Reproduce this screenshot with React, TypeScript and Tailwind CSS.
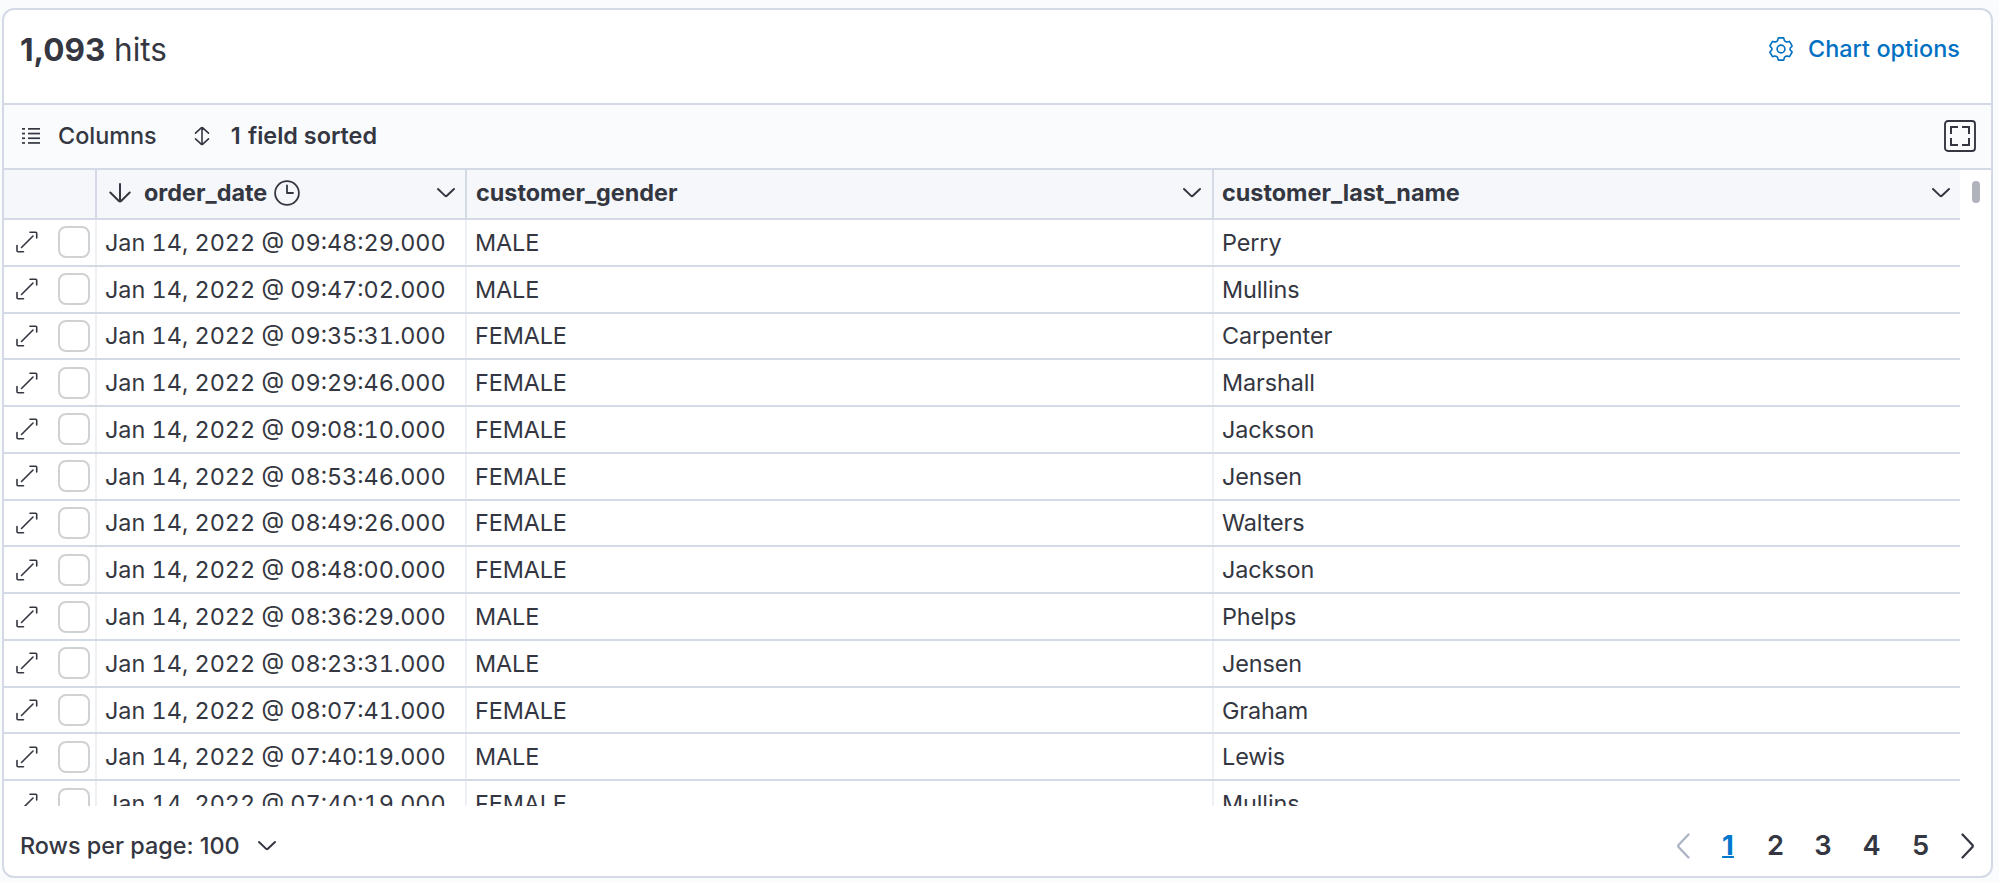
import React from "react";

const rows: [string, string, string][] = [
  ["09:48:29.000", "MALE", "Perry"],
  ["09:47:02.000", "MALE", "Mullins"],
  ["09:35:31.000", "FEMALE", "Carpenter"],
  ["09:29:46.000", "FEMALE", "Marshall"],
  ["09:08:10.000", "FEMALE", "Jackson"],
  ["08:53:46.000", "FEMALE", "Jensen"],
  ["08:49:26.000", "FEMALE", "Walters"],
  ["08:48:00.000", "FEMALE", "Jackson"],
  ["08:36:29.000", "MALE", "Phelps"],
  ["08:23:31.000", "MALE", "Jensen"],
  ["08:07:41.000", "FEMALE", "Graham"],
  ["07:40:19.000", "MALE", "Lewis"],
  ["07:40:19.000", "FEMALE", "Mullins"],
];

function Chevron({ className = "" }: { className?: string }) {
  return (
    <svg viewBox="0 0 20 12" className={`h-3 w-5 shrink-0 ${className}`} fill="none" stroke="currentColor" strokeWidth="2" strokeLinecap="round" strokeLinejoin="round">
      <path d="M2 2l6.9 6.6a1.6 1.6 0 0 0 2.2 0L18 2" />
    </svg>
  );
}

function Gear() {
  return (
    <svg viewBox="0 0 24 24" className="h-6 w-6 shrink-0" fill="none" stroke="currentColor" strokeWidth="1.6" strokeLinejoin="round">
      <path d="M9.800 .9h4.400q.6 0 .7.600l.4 1.700q.2.700.8 1l.9.500q.6.300 1.200.200l1.700-.5q.600-.2.900.4l2.100 3.700q.300.500-.1.900l-1.300 1.300q-.5.500-.5 1.300t.5 1.300l1.300 1.300q.4.400.1.900l-2.100 3.700q-.3.600-.9.400l-1.700-.5q-.6-.1-1.200.2l-.9.500q-.6.300-.8 1l-.4 1.700q-.1.600-.7.600H9.800q-.6 0-.7-.6l-.4-1.700q-.2-.7-.8-1l-.9-.5q-.6-.3-1.200-.2l-1.700.5q-.6.200-.9-.4l-2.100-3.700q-.3-.5.100-.9l1.300-1.300q.5-.5.5-1.300t-.5-1.300L1.200 9.400q-.4-.4-.1-.9l2.100-3.700q.3-.6.9-.4l1.700.5q.6.100 1.200-.2l.9-.5q.6-.3.800-1l.4-1.700q.1-.6.700-.6z" />
      <circle cx="12" cy="12" r="3.900" />
    </svg>
  );
}

function ListIcon() {
  return (
    <svg viewBox="0 0 18 16" className="h-4 w-[18px] shrink-0" fill="currentColor">
      {[0, 4.7, 9.4, 14.1].map((y) => (
        <g key={y}>
          <rect x="0" y={y} width="3" height="1.700" />
          <rect x="6" y={y} width="12" height="1.700" />
        </g>
      ))}
    </svg>
  );
}

function SortIcon() {
  return (
    <svg viewBox="0 0 16 20" className="h-5 w-4 shrink-0" fill="none" stroke="currentColor" strokeWidth="1.600" strokeLinecap="round" strokeLinejoin="round">
      <path d="M8 1.500v17M1.500 7.200L7.200 1.900q.8-.7 1.600 0L14.500 7.200M1.500 12.800l5.700 5.300q.8.700 1.600 0l5.700-5.300" />
    </svg>
  );
}

function FullScreenIcon() {
  return (
    <svg viewBox="0 0 32 32" className="h-8 w-8 shrink-0" fill="none" stroke="currentColor">
      <rect x="1" y="1" width="30" height="30" rx="3" strokeWidth="1.900" />
      <path d="M7 14V7h7M18 7h7v7M25 18v7h-7M14 25H7v-7" strokeWidth="2" />
    </svg>
  );
}

function ExpandIcon() {
  return (
    <svg viewBox="0 0 22 22" className="h-[22px] w-[22px] shrink-0" fill="none" stroke="currentColor" strokeWidth="1.600" strokeLinecap="round" strokeLinejoin="round">
      <path d="M14 1.300h5.700a1 1 0 0 1 1 1V7M1 14.500v5.200a1 1 0 0 0 1 1h5.500M5.500 16.500L17 5" />
    </svg>
  );
}

function ArrowDown() {
  return (
    <svg viewBox="0 0 22 20" className="h-5 w-[22px] shrink-0" fill="none" stroke="currentColor" strokeWidth="2" strokeLinecap="round" strokeLinejoin="round">
      <path d="M11 1v17.500M1.300 9.500l8.600 8.500a1.500 1.500 0 0 0 2.200 0l8.600-8.500" />
    </svg>
  );
}

function ClockIcon() {
  return (
    <svg viewBox="0 0 26 26" className="h-[26px] w-[26px] shrink-0" fill="none" stroke="currentColor" strokeWidth="1.800" strokeLinecap="round" strokeLinejoin="round">
      <circle cx="13" cy="13" r="11.900" />
      <path d="M13 5.500V13h6" />
    </svg>
  );
}

function PageArrow({ className = "", d }: { className?: string; d: string }) {
  return (
    <svg viewBox="0 0 14 26" className={`h-[26px] w-[14px] shrink-0 ${className}`} fill="none" stroke="currentColor" strokeWidth="2.300" strokeLinecap="round" strokeLinejoin="round">
      <path d={d} />
    </svg>
  );
}

export default function App() {
  return (
    <div className="h-[883px] w-[1999px] overflow-hidden bg-[#fafbfd] pt-2 pl-0.5 font-['Inter',sans-serif] text-[23.4px] leading-7 text-[#343741]">
      <section className="flex h-[870px] w-[1991px] flex-col overflow-hidden rounded-[12px] border-2 border-[#d3dae6] bg-white">
        <header className="flex h-[95px] shrink-0 items-start justify-between border-b-2 border-[#d3dae6] pt-[22px] pr-[31px] pl-4">
          <div className="text-[31.5px] leading-9"><strong className="font-bold">1,093</strong> hits</div>
          <button className="flex items-center gap-[15px] pt-[3px] font-medium tracking-[0.05px] text-[#0071c2]">
            <Gear />
            <span>Chart options</span>
          </button>
        </header>

        <div className="flex h-[65px] shrink-0 items-center border-b-2 border-[#d3dae6] bg-[#fafbfd] pr-[15px] pb-px pl-[18px]">
          <button className="flex items-center gap-[18px] font-medium">
            <ListIcon />
            <span>Columns</span>
          </button>
          <button className="ml-[37px] flex items-center gap-[21px] font-semibold">
            <SortIcon />
            <span>1<span className="ml-[1.5px]"> field sorted</span></span>
          </button>
          <button className="ml-auto"><FullScreenIcon /></button>
        </div>

        <div className="flex h-[636px] shrink-0 overflow-hidden">
          <div className="w-[1956px] shrink-0">
            <div className="flex h-[50px] border-b-2 border-[#d3dae6] bg-[#f5f7fa] font-bold">
              <div className="w-[93px] shrink-0 border-r-2 border-[#d3dae6]" />
              <div className="flex w-[370px] shrink-0 items-center border-r-2 border-[#d3dae6] pr-[9px] pb-0.5 pl-3">
                <ArrowDown />
                <span className="ml-[13px]">order_date</span>
                <span className="ml-[7px]"><ClockIcon /></span>
                <Chevron className="ml-auto" />
              </div>
              <div className="flex w-[747px] shrink-0 items-center justify-between border-r-2 border-[#d3dae6] pr-[10px] pb-0.5 pl-[9px]">
                <span>customer_gender</span>
                <Chevron />
              </div>
              <div className="flex flex-1 items-center justify-between pr-[9px] pb-0.5 pl-2">
                <span>customer_last_name</span>
                <Chevron />
              </div>
            </div>
            {rows.map(([time, gender, name], i) => (
              <div key={i} className="flex h-[46.780px] border-b-2 border-[#d3dae6]">
                <div className="flex w-[93px] shrink-0 items-center gap-5 border-r-2 border-[#edf0f5] pl-3">
                  <ExpandIcon />
                  <span className="h-8 w-8 shrink-0 rounded-[8px] border-2 border-[#cfd1d3] bg-white" />
                </div>
                <div className="flex w-[370px] shrink-0 items-center border-r-2 border-[#edf0f5] pt-px pl-2 whitespace-nowrap tabular-nums">
                  Jan 14, 2022 @ {time}
                </div>
                <div className="flex w-[747px] shrink-0 items-center border-r-2 border-[#edf0f5] pt-px pl-2 tracking-[-0.1px]">{gender}</div>
                <div className="flex flex-1 items-center pt-px pl-2 tracking-[-0.1px]">{name}</div>
              </div>
            ))}
          </div>
          <div className="flex flex-1 justify-center pt-[11px]">
            <div className="h-[22px] w-2 rounded-full bg-[#b1b3ba]" />
          </div>
        </div>

        <footer className="flex flex-1 items-center justify-between pt-[9px] pr-4 pl-4 font-medium">
          <button className="flex items-center gap-[17px]">
            <span>Rows per page: 100</span>
            <Chevron />
          </button>
          <nav className="flex items-center text-[27.300px] font-semibold">
            <PageArrow className="mr-[14px] text-[#abb4c4]" d="M12.500 1.500L2.800 11.700a1.800 1.800 0 0 0 0 2.600l9.700 10.200" />
            <span className="w-[48px] text-center font-bold text-[#0077cc] underline decoration-2">1</span>
            <span className="w-[47px] text-center">2</span>
            <span className="w-[48px] text-center">3</span>
            <span className="w-[49px] text-center">4</span>
            <span className="w-[49px] text-center">5</span>
            <PageArrow className="ml-[16px]" d="M1.500 1.500l9.700 10.200a1.800 1.800 0 0 1 0 2.600L1.500 24.500" />
          </nav>
        </footer>
      </section>
    </div>
  );
}
